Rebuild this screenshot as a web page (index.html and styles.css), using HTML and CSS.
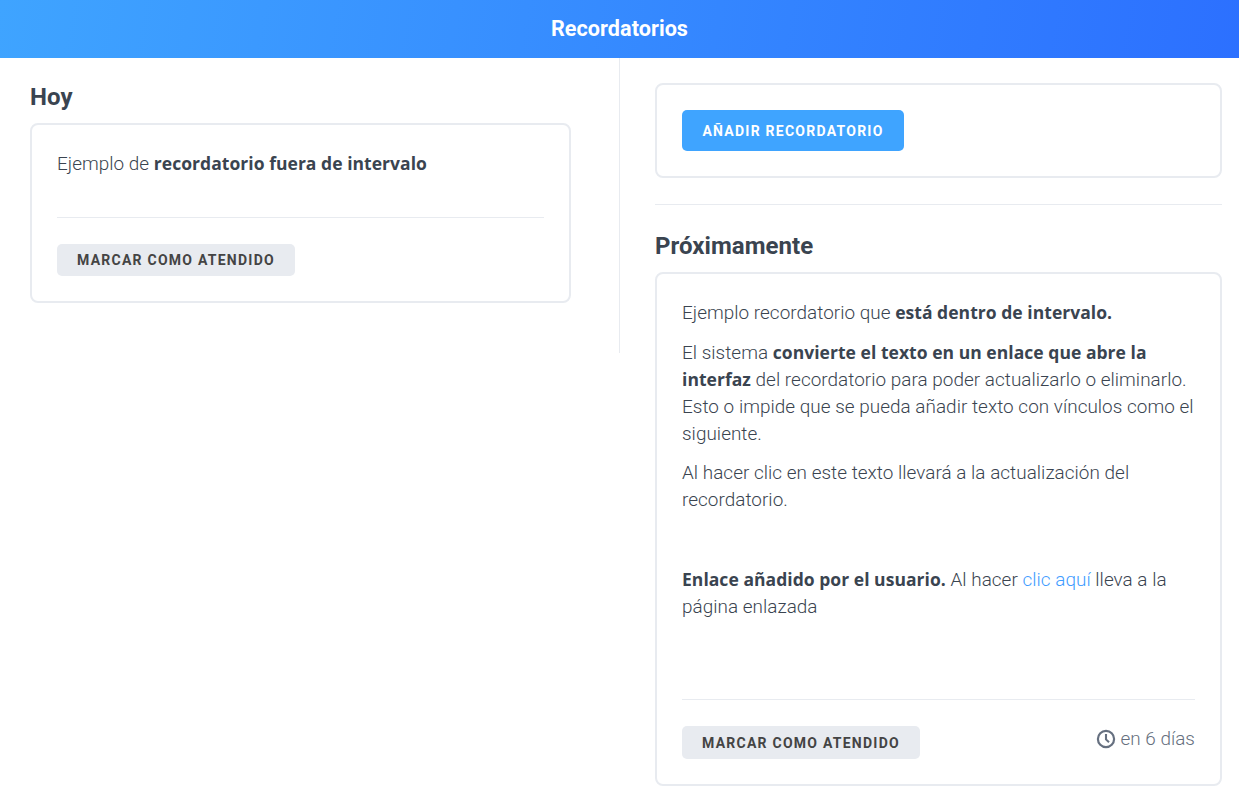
FILE: index.html
```html
<!DOCTYPE html>
<html lang="es">
<head>
<meta charset="utf-8">
<title>Recordatorios</title>
<link rel="stylesheet" href="styles.css">
</head>
<body>
<header class="topbar"><h1 class="topbar-title">Recordatorios</h1></header>
<main class="layout">
  <section class="col-left">
    <h2 class="section-title">Hoy</h2>
    <article class="card">
      <div class="card-body short">
        <p>Ejemplo de <strong>recordatorio fuera de intervalo</strong></p>
      </div>
      <div class="card-footer">
        <button class="btn btn-grey">MARCAR COMO ATENDIDO</button>
      </div>
    </article>
  </section>
  <section class="col-right">
    <div class="card add-card">
      <button class="btn btn-blue">AÑADIR RECORDATORIO</button>
    </div>
    <hr class="divider">
    <h2 class="section-title">Próximamente</h2>
    <article class="card">
      <div class="card-body tall">
        <p>Ejemplo recordatorio que <strong>está dentro de intervalo.</strong></p>
        <p>El sistema <strong>convierte el texto en un enlace que abre la interfaz</strong> del recordatorio para poder actualizarlo o eliminarlo. Esto o impide que se pueda añadir texto con vínculos como el siguiente.</p>
        <p>Al hacer clic en este texto llevará a la actualización del recordatorio.</p>
        <p class="user-link"><strong>Enlace añadido por el usuario.</strong> Al hacer <a href="#">clic aquí</a> lleva a la página enlazada</p>
      </div>
      <div class="card-footer spread">
        <button class="btn btn-grey btn-tall">MARCAR COMO ATENDIDO</button>
        <span class="due">
          <svg class="clock" viewBox="0 0 20 20" width="20" height="20" aria-hidden="true"><circle cx="10" cy="10" r="8.1" fill="none" stroke="currentColor" stroke-width="2.2"/><path d="M10 5V10.4L13 13.2" fill="none" stroke="currentColor" stroke-width="2.1"/></svg>
          en 6 días
        </span>
      </div>
    </article>
  </section>
</main>
</body>
</html>
```
FILE: styles.css
```css
* { box-sizing: border-box; }
html, body { margin: 0; padding: 0; background: #fff; }
body {
  font-family: Roboto, "Open Sans", sans-serif;
  font-weight: 300;
  font-size: 18.9px;
  letter-spacing: 0.04px;
  line-height: 27px;
  color: #3a4450;
  overflow: hidden;
  height: 801px;
}
.topbar {
  height: 58px;
  padding-bottom: 1px;
  background: linear-gradient(100deg, #3fa4ff 0%, #2c70ff 100%);
  display: flex;
  align-items: center;
  justify-content: center;
}
.topbar-title {
  margin: 0;
  color: #fff;
  font-family: Roboto, sans-serif;
  font-size: 21.6px;
  font-weight: 700;
}
.layout { display: flex; align-items: flex-start; }
.col-left {
  width: 620px;
  height: 295px;
  padding: 24px 48px 0 30px;
  border-right: 1px solid #e8ebf0;
}
.col-right {
  flex: 1;
  padding: 25px 17px 0 35px;
}
.section-title {
  margin: 0 0 10px;
  font-family: Roboto, sans-serif;
  font-size: 24px;
  line-height: 31px;
  font-weight: 700;
  color: #3a4450;
}
.card {
  border: 2px solid #e8ebf0;
  border-radius: 8px;
  padding: 25px;
  background: #fff;
}
.add-card { height: 95px; }
.card-body p { margin: 0 0 12.6px; }
.card-body.short { height: 67px; }
.card-body.tall { height: 400px; }
.card-body .user-link { margin-top: 53px; }
strong { font-family: "Open Sans", sans-serif; font-size: 17.5px; line-height: 1; font-weight: 700; }
a { color: #3f9cff; text-decoration: none; }
.card-footer {
  border-top: 1px solid #e8ebf0;
  padding-top: 26px;
}
.spread { display: flex; justify-content: space-between; align-items: flex-start; }
.btn {
  display: block;
  border: 0;
  padding: 0;
  border-radius: 5px;
  white-space: nowrap;
  font-family: Roboto, sans-serif;
  font-size: 14px;
  font-weight: 700;
  letter-spacing: 1.25px;
}
.btn-grey { height: 32px; width: 238px; background: #e8ebf0; color: #444; }
.btn-tall { height: 33px; }
.btn-blue { height: 41px; width: 222px; background: #3fa4ff; color: #fff; }
.divider { border: 0; border-top: 1px solid #e8ebf0; margin: 26px 0 26px; }
.due { display: flex; align-items: center; gap: 4px; color: #667080; line-height: 25px; }
.clock { display: block; }
```
